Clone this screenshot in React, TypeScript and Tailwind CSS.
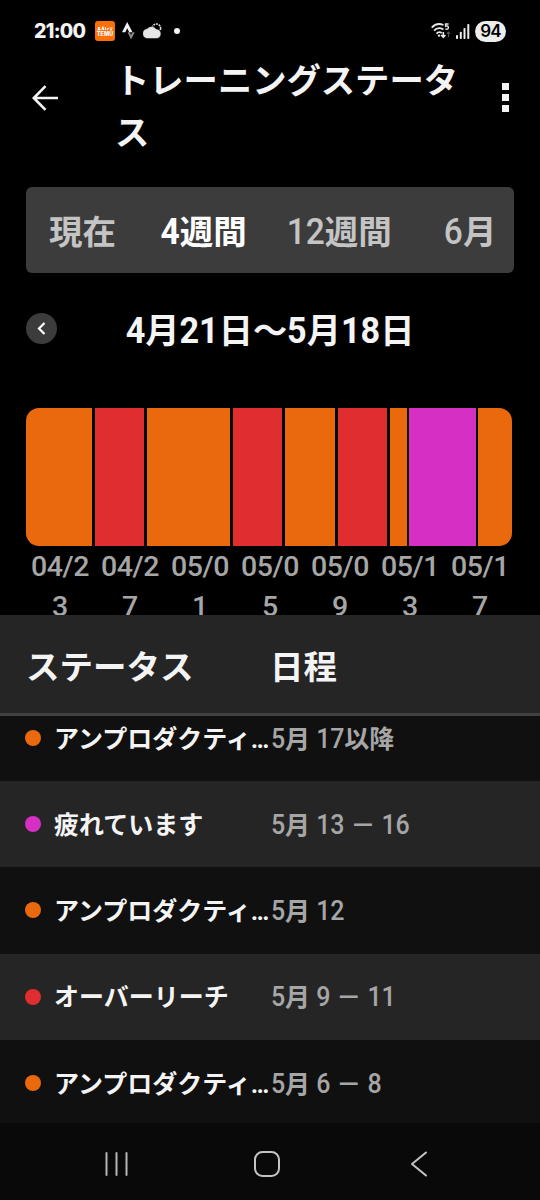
import React from 'react';

interface StatusPeriod {
  status: string;
  dates: string;
  dot: string;
  striped: boolean;
}

interface Segment {
  days: number;
  color: string;
}

const segments: Segment[] = [
  { days: 4, color: 'bg-[#ea690d] rounded-l-[13px]' },
  { days: 3, color: 'bg-[#e02d2f]' },
  { days: 5, color: 'bg-[#ea690d]' },
  { days: 3, color: 'bg-[#e02d2f]' },
  { days: 3, color: 'bg-[#ea690d]' },
  { days: 3, color: 'bg-[#e02d2f]' },
  { days: 1, color: 'bg-[#ea690d]' },
  { days: 4, color: 'bg-[#d62fc4]' },
  { days: 2, color: 'bg-[#ea690d] rounded-r-[13px]' },
];

const axisLabels = ['04/23', '04/27', '05/01', '05/05', '05/09', '05/13', '05/17'];

const periods: StatusPeriod[] = [
  { status: 'アンプロダクティブ', dates: '5月 17以降', dot: 'bg-[#ea690d]', striped: false },
  { status: '疲れています', dates: '5月 13 － 16', dot: 'bg-[#d62fc4]', striped: true },
  { status: 'アンプロダクティブ', dates: '5月 12', dot: 'bg-[#ea690d]', striped: false },
  { status: 'オーバーリーチ', dates: '5月 9 － 11', dot: 'bg-[#e02d2f]', striped: true },
  { status: 'アンプロダクティブ', dates: '5月 6 － 8', dot: 'bg-[#ea690d]', striped: false },
];

// Digits are a little taller than the kanji around them, kanji stay bold
function MixedText({ text, digits = 'font-medium' }: { text: string; digits?: string }) {
  return (
    <>
      {text.split(/(\d+)/).map((part, index) =>
        /\d/.test(part) ? (
          <span key={index} className={`inline-block origin-[50%_80%] scale-y-[1.1] ${digits}`}>
            {part}
          </span>
        ) : (
          <span key={index} className="font-bold">{part}</span>
        )
      )}
    </>
  );
}

function StatusBar() {
  return (
    <div className="flex h-[62px] items-center pl-[34px] pr-[34px] shrink-0">
      <span className="w-[53px] pt-[2px] text-[19.5px] font-extrabold leading-none tracking-[-0.7px] font-['Inter',sans-serif]">21:00</span>
      <div className="ml-[8px] flex h-[20px] w-[20px] flex-col items-center justify-center rounded-[3px] bg-[#fb6f08]">
        <svg width="16" height="5" viewBox="0 0 16 5" fill="none" stroke="#fff" strokeWidth="1.2">
          <path d="M.5 3.7h3M1 1.4l1 1.2 1-1.2M5 3.7l.8-2.5.8 2.5M8.4 1.2v2.6M10 3.8l1.4-2M12.5 2h3M13 3.8h2" />
        </svg>
        <span className="text-[5.5px] font-black leading-[6px] font-['Inter',sans-serif]">TEMU</span>
      </div>
      <svg className="ml-[7px]" width="13" height="18" viewBox="0 0 13 18">
        <path d="M0 10.2 5.2 0l5.3 10.2H7.2L5.2 6.2 3.3 10.2Z" fill="#f4f4f4" />
        <path d="M5.6 10.2h2.1L9 12.9l1.4-2.7h2.3L9 17.5Z" fill="#8b8b8b" />
      </svg>
      <svg className="ml-[8px]" width="19" height="16" viewBox="0 0 19 16">
        <circle cx="13.4" cy="5.2" r="4.2" fill="none" stroke="#ddd" strokeWidth="1.6" strokeDasharray="1.9 .8" />
        <path d="M4.9 15.6A5 5 0 0 1 4.3 5.6 5.4 5.4 0 0 1 13.2 6 4.8 4.8 0 0 1 13.2 15.6Z" fill="#e6e6e6" stroke="#000" strokeWidth=".5" />
      </svg>
      <span className="ml-[12px] h-[6px] w-[6px] rounded-full bg-[#f4f4f4]" />
      <div className="ml-auto flex items-center">
        <svg width="20" height="16" viewBox="0 0 20 16" fill="none" stroke="#e8e8e8" strokeWidth="1.8">
          <path d="M.7 4.6C4 .9 8.5.3 12.5 2M3 7.7c2.4-2.6 6-3.2 9.4-1.2M5.5 10.6c1.4-1.5 3.5-1.8 5.3-.6" />
          <circle cx="8" cy="12.6" r="1.2" fill="#e8e8e8" stroke="none" />
          <path d="M12.3 9v5M10.2 12l2.1 2.3 2.1-2.3" strokeWidth="1.6" />
          <path d="M17.5 14V9M16 10.8l1.5-1.7 1.5 1.7" stroke="#555" strokeWidth="1.1" />
          <path d="M17.6 1h-3v2.2c1.6-.5 2.8.1 2.8 1.5 0 1.5-1.6 1.9-3 1.2" strokeWidth="1.4" />
        </svg>
        <svg className="ml-[5px]" width="14" height="15" viewBox="0 0 14 15" fill="#eee">
          <rect x="0" y="11" width="2" height="4" rx=".8" />
          <rect x="3.8" y="7.7" width="2" height="7.3" rx=".8" />
          <rect x="7.5" y="4" width="2" height="11" rx=".8" />
          <rect x="11.3" y="0" width="2" height="15" rx=".8" />
        </svg>
        <span className="ml-[5px] flex h-[21px] w-[31px] items-center justify-center rounded-full bg-[#ededed] text-[17px] font-semibold tracking-[-0.8px] leading-none text-black font-['Inter',sans-serif]">
          94
        </span>
      </div>
    </div>
  );
}

function Header() {
  return (
    <header className="flex shrink-0 items-start h-[125px]">
      <button className="ml-[32px] mt-[23px]" aria-label="back">
        <svg width="27" height="26" viewBox="0 0 27 26" fill="none" stroke="#f4f4f4" strokeWidth="2.6">
          <path d="M26 13H2M13.5 1.2 1.8 13l11.7 11.8" />
        </svg>
      </button>
      <h1 className="ml-[56px] -mt-[7px] w-[346px] text-[34.3px] font-bold leading-[52px] break-all">トレーニングステータス</h1>
      <div className="ml-[41px] mt-[21px] flex flex-col gap-[4px]">
        <span className="h-[7px] w-[7px] bg-[#f4f4f4]" />
        <span className="h-[7px] w-[7px] bg-[#f4f4f4]" />
        <span className="h-[7px] w-[7px] bg-[#f4f4f4]" />
      </div>
    </header>
  );
}

function RangeTabs() {
  return (
    <nav className="mx-[26px] flex h-[86px] shrink-0 items-center rounded-[6px] bg-[#3c3c3c] pl-[23px] pt-[6px] text-[33.5px] leading-none text-[#c4c4c4] whitespace-nowrap">
      <span><MixedText text="現在" /></span>
      <span className="ml-[44.5px] text-white"><MixedText text="4週間" digits="font-bold" /></span>
      <span className="ml-[40px]"><MixedText text="12週間" /></span>
      <span className="ml-[52px]"><MixedText text="6月" /></span>
    </nav>
  );
}

function DateRange() {
  return (
    <div className="mx-[26px] mt-[24px] flex h-[63px] shrink-0 items-center">
      <button className="flex h-[31px] w-[31px] items-center justify-center rounded-full bg-[#3c3c3c]" aria-label="previous">
        <svg width="9" height="13" viewBox="0 0 9 13" fill="none" stroke="#fff" strokeWidth="2.2">
          <path d="M7.5 1 2 6.5 7.5 12" />
        </svg>
      </button>
      <h2 className="flex-1 pr-[31px] pt-[5px] text-center text-[34.2px] leading-none whitespace-nowrap">
        <MixedText text="4月21日～5月18日" digits="font-bold" />
      </h2>
    </div>
  );
}

function StatusChart() {
  return (
    <div className="mt-[48px] h-[207px] shrink-0 overflow-hidden">
      <div className="ml-[25.5px] mr-[28.5px] flex h-[138px] gap-[2.7px]">
        {segments.map((segment, index) => (
          <div key={index} className={`${segment.color} basis-0`} style={{ flexGrow: segment.days }} />
        ))}
      </div>
      <div className="ml-[25px] mt-[1px] grid w-[490px] grid-cols-7 text-center text-[28.5px] font-medium tracking-[-0.4px] leading-[40px] text-[#a6a6a6]">
        {axisLabels.map((label) => (
          <div key={label}>
            <div>{label.slice(0, 4)}</div>
            <div>{label.slice(4)}</div>
          </div>
        ))}
      </div>
    </div>
  );
}

function StatusTable() {
  return (
    <section className="flex h-[508px] shrink-0 flex-col overflow-hidden">
      <div className="z-10 flex h-[101px] shrink-0 items-center border-b-[3px] border-[#414141] bg-[#252525] pl-[26px] pt-[7px] text-[33.5px] font-bold leading-none">
        <span className="w-[244px]">ステータス</span>
        <span>日程</span>
      </div>
      <div className="-mt-[21px] shrink-0">
        {periods.map((period, index) => (
          <div key={index} className={`flex h-[86.2px] items-center pl-[25px] text-[25px] ${period.striped ? 'bg-[#252525]' : 'bg-[#101010]'}`}>
            <span className={`h-[16px] w-[16px] shrink-0 rounded-full ${period.dot}`} />
            <span className="ml-[13px] w-[217px] shrink-0 truncate pt-[3px] font-bold">{period.status}</span>
            <span className="pt-[3px] tracking-[-0.1px] text-[#a6a6a6] whitespace-nowrap">
              <MixedText text={period.dates} />
            </span>
          </div>
        ))}
      </div>
    </section>
  );
}

function NavigationBar() {
  return (
    <div className="flex h-[77px] shrink-0 items-center bg-[#090909] pt-[4px] pl-[104px]">
      <svg width="26" height="26" viewBox="0 0 26 26" stroke="#b5b5b5" strokeWidth="2" strokeLinecap="round">
        <path d="M2.5 2v22M12.5 2v22M22.5 2v22" />
      </svg>
      <svg className="ml-[123px]" width="28" height="26" viewBox="0 0 28 26" fill="none" stroke="#c4c4c4" strokeWidth="2">
        <rect x="2" y="1" width="24" height="24" rx="7.5" />
      </svg>
      <svg className="ml-[129px]" width="18" height="26" viewBox="0 0 18 26" fill="none" stroke="#c4c4c4" strokeWidth="2" strokeLinecap="round" strokeLinejoin="round">
        <path d="M16 1.5 2 13l14 11.5" />
      </svg>
    </div>
  );
}

export default function App() {
  return (
    <div lang="ja" className="flex h-[1200px] w-[540px] flex-col overflow-hidden bg-black text-[#f4f4f4] font-['Roboto','Noto_Sans_CJK_JP',sans-serif]">
      <StatusBar />
      <Header />
      <RangeTabs />
      <DateRange />
      <StatusChart />
      <StatusTable />
      <NavigationBar />
    </div>
  );
}
